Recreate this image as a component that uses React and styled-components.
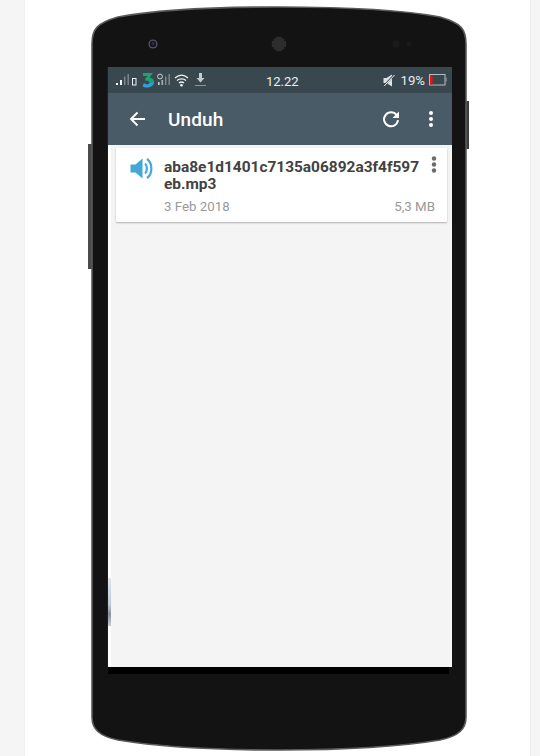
import React from "react";
import styled, { createGlobalStyle } from "styled-components";

const Global = createGlobalStyle`
  html, body { margin: 0; padding: 0; height: 756px; overflow: hidden; background: #f5f5f5; }
  * { box-sizing: border-box; }
`;

const Page = styled.div`
  width: 540px;
  height: 756px;
  background: #f5f5f5;
  overflow: hidden;
`;
const Column = styled.main`
  width: 507px;
  height: 756px;
  margin-left: 24px;
  padding: 7px 0 0 67px;
  background: #fff;
  border-left: 1px solid #efefef;
  border-right: 1px solid #efefef;
`;
const Phone = styled.div`
  position: relative;
  width: 374px;
  height: 743px;
  padding: 60px 14px 0 16px;
`;
const PhoneShell = styled.svg`
  position: absolute;
  left: -5px;
  top: -1px;
  width: 384px;
  height: 748px;
`;
const Lens = styled.svg`
  position: absolute;
  left: ${p => p.$x}px;
  top: ${p => p.$y}px;
`;
const Screen = styled.div`
  position: relative;
  width: 344px;
  height: 600px;
  display: flex;
  flex-direction: column;
  background: #f4f4f4;
  box-shadow: -1px 0 0 #3a1218;
  font-family: Roboto, "Liberation Sans", sans-serif;
`;
const BottomBar = styled.div`
  position: relative;
  width: 341px;
  height: 7px;
  background: #000;
  box-shadow: -1px 0 0 #2a0a10;
`;
const StatusBar = styled.div`
  height: 26px;
  flex: none;
  display: flex;
  align-items: center;
  padding: 0 5px 0 8px;
  background: #39484f;
  color: #eceff0;
`;
const StatusLeft = styled.div`
  width: 150px;
  display: flex;
  align-items: center;
  gap: 3px;
`;
const Clock = styled.span`
  font-size: 13px;
  width: 32px;
  margin-top: 2px;
`;
const StatusRight = styled.div`
  margin-left: auto;
  display: flex;
  align-items: center;
  gap: 6px;
`;
const Percent = styled.span`
  font-size: 13.2px;
  color: #e8ebec;
  margin-right: -2px;
`;
const Toolbar = styled.header`
  height: 52px;
  flex: none;
  display: flex;
  align-items: center;
  padding: 0 14px 0 21px;
  background: #485b66;
  color: #fff;
`;
const Title = styled.h1`
  margin: 1px 0 0 22px;
  font-size: 19px;
  font-weight: 500;
  letter-spacing: 0.1px;
  flex: 1;
`;
const ToolIcons = styled.div`
  display: flex;
  align-items: center;
  gap: 28px;
`;
const List = styled.div`
  flex: 1;
  padding: 3px 5px 0 8px;
  box-shadow: inset 3px 0 0 #fff;
`;
const Card = styled.article`
  height: 74px;
  display: flex;
  background: #fff;
  box-shadow: 0 1px 2px rgba(0, 0, 0, 0.28);
  border-radius: 1px;
  padding: 9px 12px 0 14px;
`;
const CardBody = styled.div`
  width: 256px;
  margin-left: 11px;
  padding-top: 2px;
  flex: none;
`;
const FileName = styled.div`
  font-size: 15.45px;
  font-weight: 700;
  line-height: 17px;
  color: #424242;
  word-break: break-all;
  width: 258px;
`;
const Meta = styled.div`
  display: flex;
  justify-content: space-between;
  width: 271px;
  margin-top: 6px;
  font-size: 13.3px;
  line-height: 16px;
  color: #999;
`;
const Thumb = styled.div`
  position: absolute;
  left: 0;
  top: 511px;
  width: 3px;
  height: 48px;
  background: linear-gradient(#dfe5ea, #bcccdc 55%, #8a9097 75%, #c6ced6);
`;

const Signal = () => (
  <svg width="14" height="14" viewBox="0 0 14 14">
    <rect x="0" y="10" width="2" height="2" fill="#fff" />
    <rect x="4" y="7" width="2" height="5" fill="#f0f2f3" />
    <rect x="8" y="3.5" width="1.4" height="8.5" fill="#7f8c92" />
    <rect x="11.5" y="1" width="1.4" height="11" fill="#7f8c92" />
  </svg>
);

export default function App() {
  return (
    <Page>
      <Global />
      <Column>
        <Phone>
          <PhoneShell viewBox="87 7 384 748">
            <rect x="88" y="145" width="6" height="125" fill="#4a4a4a" />
            <rect x="462" y="102" width="7" height="48" fill="#3c3c3c" />
            <path
              d="M92 45 C92 30 97 24 118 18 C160 10 225 8 279 8 C333 8 398 10 440 18 C461 24 466 30 466 45 L466 718 C466 730 459 737 440 741 C398 748 333 751 279 751 C225 751 160 748 118 741 C99 737 92 730 92 718 Z"
              fill="#131313"
              stroke="#5a5a5a"
              strokeWidth="1.6"
            />
          </PhoneShell>
          <Lens $x={55} $y={31} width="12" height="12" viewBox="0 0 12 12">
            <circle cx="6" cy="6" r="4.6" fill="#55555a" />
            <circle cx="6" cy="6" r="3.2" fill="#15151c" />
            <circle cx="6" cy="5.6" r="1.3" fill="#25307a" />
          </Lens>
          <Lens $x={178} $y={28} width="18" height="18" viewBox="0 0 18 18">
            <circle cx="9" cy="9" r="8" fill="#1a1a1a" />
            {Array.from({ length: 49 }, (_, i) => {
              const x = 3 + (i % 7) * 2;
              const y = 3 + Math.floor(i / 7) * 2;
              return (x - 9) ** 2 + (y - 9) ** 2 < 50 ? (
                <circle key={i} cx={x} cy={y} r="0.65" fill="#525252" />
              ) : null;
            })}
          </Lens>
          <Lens $x={300} $y={33} width="22" height="8" viewBox="0 0 22 8">
            <circle cx="4" cy="4" r="3.5" fill="#1b1b1b" />
            <circle cx="17" cy="4" r="2.5" fill="#1b1b1b" />
          </Lens>
          <Screen>
            <StatusBar>
              <StatusLeft>
                <Signal />
                <svg width="5" height="8" viewBox="0 0 5 8" style={{ marginLeft: -1, marginTop: 4 }}>
                  <rect x="0.5" y="0.5" width="3.5" height="6.5" fill="none" stroke="#eef" strokeWidth="1" />
                </svg>
                <svg width="13" height="16" viewBox="0 0 13 16" style={{ marginLeft: 2 }}>
                  <path d="M1 1 H11 L7.5 5.5 C11 6 12 8 12 10 L7.5 10.5 C7.5 9 5.5 8.5 3.5 8.8 L3.2 6.6 L5.5 4 H1 Z" fill="#1fa36d" />
                  <path d="M0.5 14 L2 11 C4 13 7.5 12.5 7.5 10.5 L12 10 C12 14 8 15.5 5 15.5 C3 15.5 1.5 15 0.5 14 Z" fill="#2f9fd8" />
                </svg>
                <svg width="14" height="14" viewBox="0 0 14 14" style={{ marginLeft: -1 }}>
                  <circle cx="3" cy="3.5" r="2.4" fill="none" stroke="#cfd6d8" strokeWidth="1" />
                  <rect x="1" y="9" width="1.6" height="3" fill="#c5cdd0" />
                  <rect x="4.5" y="7" width="1.6" height="5" fill="#aab3b7" />
                  <rect x="8" y="3.5" width="1.4" height="8.5" fill="#7f8c92" />
                  <rect x="11.5" y="1" width="1.4" height="11" fill="#7f8c92" />
                </svg>
                <svg width="15" height="13" viewBox="0 0 15 13">
                  <path d="M1 4 C5 0.5 10 0.5 14 4 M3 6.5 C5.5 4.3 9.5 4.3 12 6.5 M5 9 C6.5 7.8 8.5 7.8 10 9" fill="none" stroke="#f3f5f5" strokeWidth="1.3" />
                  <circle cx="7.5" cy="11.3" r="1.3" fill="#f3f5f5" />
                </svg>
                <svg width="11" height="14" viewBox="0 0 11 14" style={{ marginLeft: 3 }}>
                  <path d="M4 0 H7 V5 H9.5 L5.5 9.5 L1.5 5 H4 Z" fill="#c4cbce" />
                  <rect x="0" y="12" width="11" height="1" fill="#8b979c" />
                </svg>
              </StatusLeft>
              <Clock>12.22</Clock>
              <StatusRight>
                <svg width="12" height="13" viewBox="0 0 12 13">
                  <path d="M0.5 4 H3.5 L9 0.5 V12.5 L3.5 9 H0.5 Z" fill="#dde2e3" />
                  <path d="M0.5 12.5 L11.5 0.5" stroke="#39484f" strokeWidth="1.8" />
                  <path d="M1.2 12 L11.5 1" stroke="#eef1f1" strokeWidth="1" />
                </svg>
                <Percent>19%</Percent>
                <svg width="18" height="12" viewBox="0 0 18 12">
                  <rect x="0.5" y="0.5" width="15.5" height="10.5" fill="none" stroke="#b4bcc0" />
                  <rect x="1" y="1" width="2.5" height="9.5" fill="#f01010" />
                  <rect x="16.5" y="3.5" width="1" height="4" fill="#9aa5a9" />
                </svg>
              </StatusRight>
            </StatusBar>
            <Toolbar>
              <svg width="17" height="16" viewBox="0 0 17 16">
                <path d="M16 8 H2 M8.5 1.5 L2 8 L8.5 14.5" fill="none" stroke="#fff" strokeWidth="1.9" />
              </svg>
              <Title>Unduh</Title>
              <ToolIcons>
                <svg width="18" height="18" viewBox="0 0 18 18">
                  <path d="M14.6 5 A7 7 0 1 0 16 10.2" fill="none" stroke="#fff" strokeWidth="2" />
                  <path d="M17 1.5 V8 H10.5 Z" fill="#fff" />
                </svg>
                <svg width="6" height="16" viewBox="0 0 6 16" style={{ marginRight: 4 }}>
                  <circle cx="3" cy="2" r="2" fill="#fff" />
                  <circle cx="3" cy="8" r="2" fill="#fff" />
                  <circle cx="3" cy="14" r="2" fill="#fff" />
                </svg>
              </ToolIcons>
            </Toolbar>
            <List>
              <Card>
                <svg width="23" height="23" viewBox="0 0 23 23" style={{ flex: "none" }}>
                  <path d="M0.5 7.5 H5.5 L12.5 1.5 V21.5 L5.5 15.5 H0.5 Z" fill="#43a7d8" />
                  <path d="M15 6.5 C17.5 8.5 17.5 14.5 15 16.5" fill="none" stroke="#43a7d8" strokeWidth="2.2" />
                  <path d="M17 2 C22.8 6 22.8 17 17 21" fill="none" stroke="#43a7d8" strokeWidth="2.2" />
                </svg>
                <CardBody>
                  <FileName>aba8e1d1401c7135a06892a3f4f597eb.mp3</FileName>
                  <Meta>
                    <span>3 Feb 2018</span>
                    <span>5,3 MB</span>
                  </Meta>
                </CardBody>
                <svg width="6" height="17" viewBox="0 0 6 17" style={{ flex: "none", marginLeft: 11, marginTop: -1 }}>
                  <circle cx="3" cy="2.5" r="2.2" fill="#6b6b6b" />
                  <circle cx="3" cy="8.5" r="2.2" fill="#6b6b6b" />
                  <circle cx="3" cy="14.5" r="2.2" fill="#6b6b6b" />
                </svg>
              </Card>
            </List>
            <Thumb />
          </Screen>
          <BottomBar />
        </Phone>
      </Column>
    </Page>
  );
}
